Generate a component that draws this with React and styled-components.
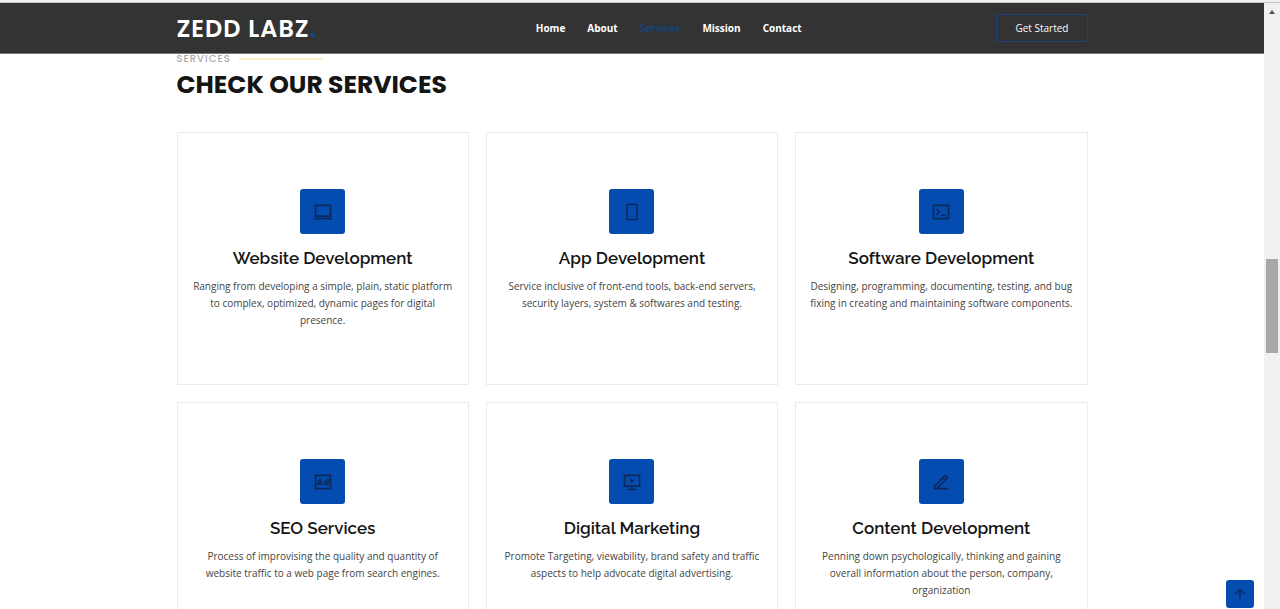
import React from "react";
import styled, { createGlobalStyle } from "styled-components";
import {
  RiMacbookLine,
  RiSmartphoneLine,
  RiTerminalBoxLine,
  RiAdvertisementLine,
  RiSlideshow3Line,
  RiArrowUpLine,
} from "react-icons/ri";

const GlobalStyle = createGlobalStyle`
  *, *::before, *::after { box-sizing: border-box; }
  body {
    margin: 0;
    background: #fff;
    color: #444;
    font-family: "Open Sans", sans-serif;
    font-size: 10px;
  }
`;

const Window = styled.div`
  display: flex;
  flex-direction: column;
  height: 100vh;
  overflow: hidden;
`;

const TopEdge = styled.div`
  flex: none;
  height: 3px;
  background: #f0f0f0;
  border-bottom: 1px solid #c4c4c4;
`;

const Viewport = styled.div`
  display: flex;
  flex: 1;
  min-height: 0;
`;

const Page = styled.div`
  position: relative;
  flex: 1;
  min-width: 0;
  overflow: hidden;
`;

const Container = styled.div`
  width: 100%;
  max-width: 943px;
  margin: 0 auto;
  padding: 0 16px;
`;

const Header = styled.header`
  background: #333;
  border-bottom: 1px solid #777;
`;

const HeaderRow = styled(Container)`
  display: flex;
  align-items: center;
  justify-content: space-between;
  height: 50px;
`;

const Logo = styled.a`
  color: #fff;
  font-family: Poppins, sans-serif;
  font-size: 24px;
  font-weight: 600;
  letter-spacing: 1px;
  text-decoration: none;

  span { color: #0d4a94; }
`;

const Nav = styled.nav`
  display: flex;
  gap: 22px;
  margin-left: 24px;
`;

const NavLink = styled.a`
  color: ${({ $active }) => ($active ? "#164377" : "#fff")};
  font-weight: 700;
  text-decoration: none;
`;

const GetStarted = styled.button`
  height: 28px;
  padding: 0 18px;
  border: 1px solid #1b4582;
  border-radius: 2px;
  background: transparent;
  color: #fff;
  font: 400 10px "Open Sans", sans-serif;
`;

const SectionTitle = styled.div`
  margin-bottom: 26px;
`;

const Eyebrow = styled.h2`
  display: flex;
  align-items: center;
  gap: 8px;
  margin: 0;
  color: #aaa;
  font: 500 10px/10px Poppins, sans-serif;
  letter-spacing: 1px;

  &::after {
    content: "";
    width: 84px;
    height: 2px;
    background: #fdedc6;
  }
`;

const Heading = styled.p`
  margin: 0;
  color: #151515;
  font: 700 25px/42px Poppins, sans-serif;
`;

const Grid = styled.div`
  display: grid;
  grid-template-columns: repeat(3, 1fr);
  gap: 17px;
`;

const Card = styled.article`
  display: flex;
  flex-direction: column;
  align-items: center;
  min-height: 253px;
  padding: 56px 14px 55px;
  border: 1px solid #ebebeb;
  text-align: center;
`;

const IconTile = styled.div`
  display: grid;
  place-items: center;
  width: 45px;
  height: 45px;
  border-radius: 3px;
  background: #054cb0;
  color: #0b2a5c;
  font-size: 20px;
`;

const CardTitle = styled.h3`
  margin: 12px 0 8px;
  color: #151515;
  font: 600 17px/24px Raleway, sans-serif;
`;

const CardText = styled.p`
  margin: 0;
  line-height: 17px;
`;

const BackToTop = styled.a`
  position: absolute;
  right: 10px;
  bottom: 1px;
  display: grid;
  place-items: center;
  width: 28px;
  height: 28px;
  border-radius: 3px;
  background: #054cb0;
  color: #0b2a5c;
  font-size: 16px;
`;

const ScrollTrack = styled.div`
  display: flex;
  flex-direction: column;
  align-items: center;
  flex: none;
  width: 16px;
  background: #f0f0f0;
`;

const ScrollArrow = styled.div`
  width: 0;
  margin-top: 7px;
  border: 3px solid transparent;
  border-top: 0;
  border-bottom: 4px solid #505050;
`;

const ScrollGap = styled.div`
  flex: 245 0 0;
`;

const ScrollThumb = styled.div`
  flex: 94 0 0;
  width: 12px;
  background: #a8a8a8;
`;

const ScrollRest = styled.div`
  flex: 256 0 0;
`;

const PencilIcon = () => (
  <svg viewBox="0 0 24 24" width="1em" height="1em" fill="currentColor" aria-hidden="true">
    <path d="M5 19h1.414l9.314-9.314-1.414-1.414L5 17.586V19zm16 2H3v-4.243L16.435 3.322a1 1 0 0 1 1.414 0l2.829 2.829a1 1 0 0 1 0 1.414L9.243 19H21v2zM15.728 6.858l1.414 1.414 1.414-1.414-1.414-1.414-1.414 1.414z" />
  </svg>
);

const links = ["Home", "About", "Services", "Mission", "Contact"];

const services = [
  { icon: RiMacbookLine, title: "Website Development", text: "Ranging from developing a simple, plain, static platform to complex, optimized, dynamic pages for digital presence." },
  { icon: RiSmartphoneLine, title: "App Development", text: "Service inclusive of front-end tools, back-end servers, security layers, system & softwares and testing." },
  { icon: RiTerminalBoxLine, title: "Software Development", text: "Designing, programming, documenting, testing, and bug fixing in creating and maintaining software components." },
  { icon: RiAdvertisementLine, title: "SEO Services", text: "Process of improvising the quality and quantity of website traffic to a web page from search engines." },
  { icon: RiSlideshow3Line, title: "Digital Marketing", text: "Promote Targeting, viewability, brand safety and traffic aspects to help advocate digital advertising." },
  { icon: PencilIcon, title: "Content Development", text: "Penning down psychologically, thinking and gaining overall information about the person, company, organization" },
];

export default function App() {
  return (
    <Window id="top">
      <GlobalStyle />
      <TopEdge />
      <Viewport>
        <Page>
          <Header>
            <HeaderRow>
              <Logo href="#top">ZEDD LABZ<span>.</span></Logo>
              <Nav>
                {links.map((label) => (
                  <NavLink key={label} href={`#${label.toLowerCase()}`} $active={label === "Services"}>
                    {label}
                  </NavLink>
                ))}
              </Nav>
              <GetStarted type="button">Get Started</GetStarted>
            </HeaderRow>
          </Header>
          <Container as="main" id="services">
            <SectionTitle>
              <Eyebrow>SERVICES</Eyebrow>
              <Heading>CHECK OUR SERVICES</Heading>
            </SectionTitle>
            <Grid>
              {services.map(({ icon: Icon, title, text }) => (
                <Card key={title}>
                  <IconTile><Icon /></IconTile>
                  <CardTitle>{title}</CardTitle>
                  <CardText>{text}</CardText>
                </Card>
              ))}
            </Grid>
          </Container>
          <BackToTop href="#top" aria-label="Back to top"><RiArrowUpLine /></BackToTop>
        </Page>
        <ScrollTrack aria-hidden="true">
          <ScrollArrow />
          <ScrollGap />
          <ScrollThumb />
          <ScrollRest />
        </ScrollTrack>
      </Viewport>
    </Window>
  );
}
